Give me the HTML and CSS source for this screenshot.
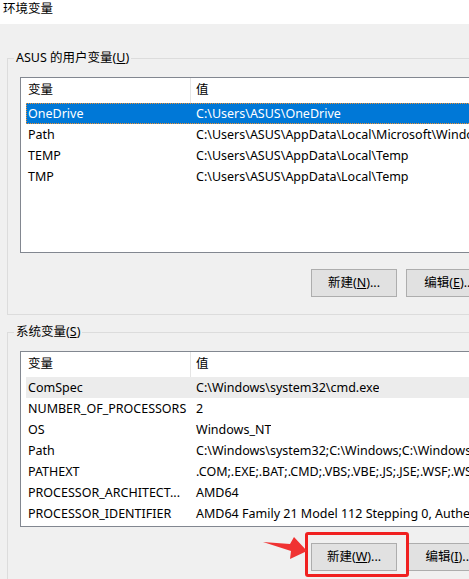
FILE: index.html
```html
<!DOCTYPE html>
<html lang="zh-CN">
<head>
<meta charset="utf-8">
<title>环境变量</title>
<link rel="stylesheet" href="styles.css">
</head>
<body>
<div class="window">
  <div class="titlebar">环境变量</div>
  <div class="client">
    <fieldset class="group">
      <legend class="group-label">ASUS 的用户变量(<u>U</u>)</legend>
      <div class="list">
        <div class="list-head">
          <div class="hcell hcell-name">变量</div>
          <div class="hcell">值</div>
        </div>
        <div class="row selected"><div class="cell cell-name">OneDrive</div><div class="cell">C:\Users\ASUS\OneDrive</div></div>
        <div class="row"><div class="cell cell-name">Path</div><div class="cell">C:\Users\ASUS\AppData\Local\Microsoft\WindowsApps;</div></div>
        <div class="row"><div class="cell cell-name">TEMP</div><div class="cell">C:\Users\ASUS\AppData\Local\Temp</div></div>
        <div class="row"><div class="cell cell-name">TMP</div><div class="cell">C:\Users\ASUS\AppData\Local\Temp</div></div>
      </div>
      <div class="buttons">
        <button class="btn">新建(<u>N</u>)...</button>
        <button class="btn">编辑(<u>E</u>)...</button>
        <button class="btn">删除(<u>D</u>)</button>
      </div>
    </fieldset>

    <fieldset class="group group-sys">
      <legend class="group-label">系统变量(<u>S</u>)</legend>
      <div class="list">
        <div class="list-head">
          <div class="hcell hcell-name">变量</div>
          <div class="hcell">值</div>
        </div>
        <div class="row inactive"><div class="cell cell-name">ComSpec</div><div class="cell">C:\Windows\system32\cmd.exe</div></div>
        <div class="row"><div class="cell cell-name">NUMBER_OF_PROCESSORS</div><div class="cell">2</div></div>
        <div class="row"><div class="cell cell-name">OS</div><div class="cell">Windows_NT</div></div>
        <div class="row"><div class="cell cell-name">Path</div><div class="cell">C:\Windows\system32;C:\Windows;C:\Windows\System32\Wbem;</div></div>
        <div class="row"><div class="cell cell-name">PATHEXT</div><div class="cell">.COM;.EXE;.BAT;.CMD;.VBS;.VBE;.JS;.JSE;.WSF;.WSH;.MSC</div></div>
        <div class="row"><div class="cell cell-name">PROCESSOR_ARCHITECT...</div><div class="cell">AMD64</div></div>
        <div class="row"><div class="cell cell-name">PROCESSOR_IDENTIFIER</div><div class="cell">AMD64 Family 21 Model 112 Stepping 0, AuthenticAMD</div></div>
      </div>
      <div class="buttons">
        <button class="btn">新建(<u>W</u>)...</button>
        <button class="btn">编辑(<u>I</u>)...</button>
        <button class="btn">删除(<u>L</u>)</button>
      </div>
    </fieldset>
  </div>

  <div class="highlight-box"></div>
  <svg class="arrow" width="50" height="30" viewBox="0 0 50 30">
    <polygon points="1,6 28,8 32,1 45,15 28,23 29,15" fill="#f03232"/>
  </svg>
</div>
</body>
</html>
```

FILE: styles.css
```css
* { box-sizing: border-box; }
html, body {
  margin: 0;
  padding: 0;
  width: 469px;
  height: 579px;
  overflow: hidden;
  background: #f0f0f0;
}
body {
  font-family: "Noto Sans", "Noto Sans CJK SC", sans-serif;
  font-size: 12.5px;
  color: #000;
}
.window {
  position: relative;
  width: 640px;
  height: 579px;
}
.titlebar {
  height: 24px;
  background: #fff;
  padding: 1px 0 0 3px;
  line-height: 16px;
}
.client {
  background: #f0f0f0;
  padding-top: 26px;
  height: 555px;
}
.group {
  margin: 0 0 0 7px;
  width: 620px;
  border: 1px solid #dcdcdc;
  padding: 11px 0 17px 12px;
  min-width: 0;
}
.group-sys {
  margin-top: 9px;
  border-bottom: none;
}
.group-label {
  padding: 0 2px;
  margin-left: -6px;
  line-height: 16px;
  height: 16px;
}
.list {
  width: 600px;
  height: 176px;
  border: 1px solid #828790;
  background: #fff;
  overflow: hidden;
  white-space: nowrap;
}
.list-head {
  display: flex;
  height: 25px;
  align-items: stretch;
}
.hcell {
  line-height: 24px;
  padding-left: 5px;
}
.hcell-name {
  width: 170px;
  flex: none;
  padding-left: 7px;
  border-right: 1px solid #e5e5e5;
}
.row {
  display: flex;
  height: 21px;
  line-height: 21px;
  margin-left: 5px;
}
.cell {
  padding-left: 2px;
  overflow: hidden;
}
.cell-name {
  width: 168px;
  flex: none;
}
.row.selected {
  background: #0078d7;
  color: #fff;
  outline: 1px dotted #f09030;
  outline-offset: -1px;
}
.row.inactive {
  background: #ececec;
}
.buttons {
  display: flex;
  gap: 9px;
  margin-top: 16px;
  padding-left: 291px;
}
.btn {
  width: 86px;
  height: 28px;
  flex: none;
  background: #e1e1e1;
  border: 1px solid #adadad;
  font: inherit;
  color: #000;
  padding: 0;
  line-height: 26px;
}
.highlight-box {
  position: absolute;
  left: 305px;
  top: 532px;
  width: 104px;
  height: 45px;
  border: 3px solid #f02020;
  border-radius: 3px;
}
.arrow {
  position: absolute;
  left: 262px;
  top: 536px;
}
```
